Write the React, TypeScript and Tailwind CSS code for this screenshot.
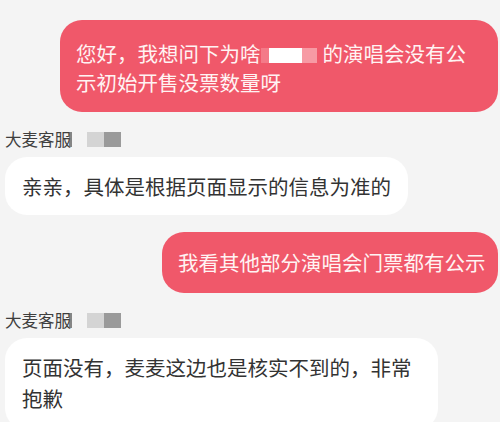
import React from "react";

const font = { fontFamily: '"Noto Sans CJK SC", "Noto Sans", sans-serif' };

function AgentLabel() {
  return (
    <div className="flex h-[24px] items-center pl-[5px]">
      <span className="relative text-[16.5px] leading-[24px] text-[#3f3f3f]">
        大麦客服
        <span className="absolute right-[-1px] top-[5px] h-[15px] w-[3px] bg-[#555]/70" />
      </span>
      <span className="ml-[16px] flex h-[15px] w-[34px]">
        <span className="h-full w-1/2 bg-[#d4d4d4]" />
        <span className="h-full w-1/2 bg-[#9a9a9a]" />
      </span>
    </div>
  );
}

export default function App() {
  return (
    <div
      className="flex h-[422px] w-[500px] flex-col overflow-hidden bg-[#f4f4f4] pt-[20px]"
      style={font}
    >
      {/* my question */}
      <div className="mr-[2px] self-end w-[438px] rounded-[22px] bg-[#f0586a] pb-[15px] pl-[16px] pt-[19px] text-[20.5px] leading-[29px] text-[#fff3f3]">
        您好，我想问下为啥
        <span className="inline-flex h-[15px] w-[62px] align-[-1px]">
          <span className="h-full w-[8px] bg-[#f47a88]" />
          <span className="h-full w-[33px] bg-white" />
          <span className="h-full w-[15px] bg-[#f79aa4]" />
        </span>
        的演唱会没有公
        <br />
        示初始开售没票数量呀
      </div>

      <div className="mt-[15px]">
        <AgentLabel />
      </div>
      <div className="ml-[5px] mt-[6px] w-[403px] rounded-[22px] bg-white py-[14px] pl-[17px] text-[20.5px] leading-[30px] text-[#333]">
        亲亲，具体是根据页面显示的信息为准的
      </div>

      <div className="mr-[2px] mt-[17px] self-end w-[336px] rounded-[22px] bg-[#f0586a] py-[15px] pl-[16px] text-[20.5px] leading-[31px] text-[#fff3f3]">
        我看其他部分演唱会门票都有公示
      </div>

      <div className="mt-[15px]">
        <AgentLabel />
      </div>
      <div className="ml-[5px] mt-[6px] w-[433px] rounded-[22px] bg-white pb-[16px] pl-[17px] pt-[14px] text-[20.5px] leading-[31px] text-[#333]">
        页面没有，麦麦这边也是核实不到的，非常
        <br />
        抱歉
      </div>
    </div>
  );
}
